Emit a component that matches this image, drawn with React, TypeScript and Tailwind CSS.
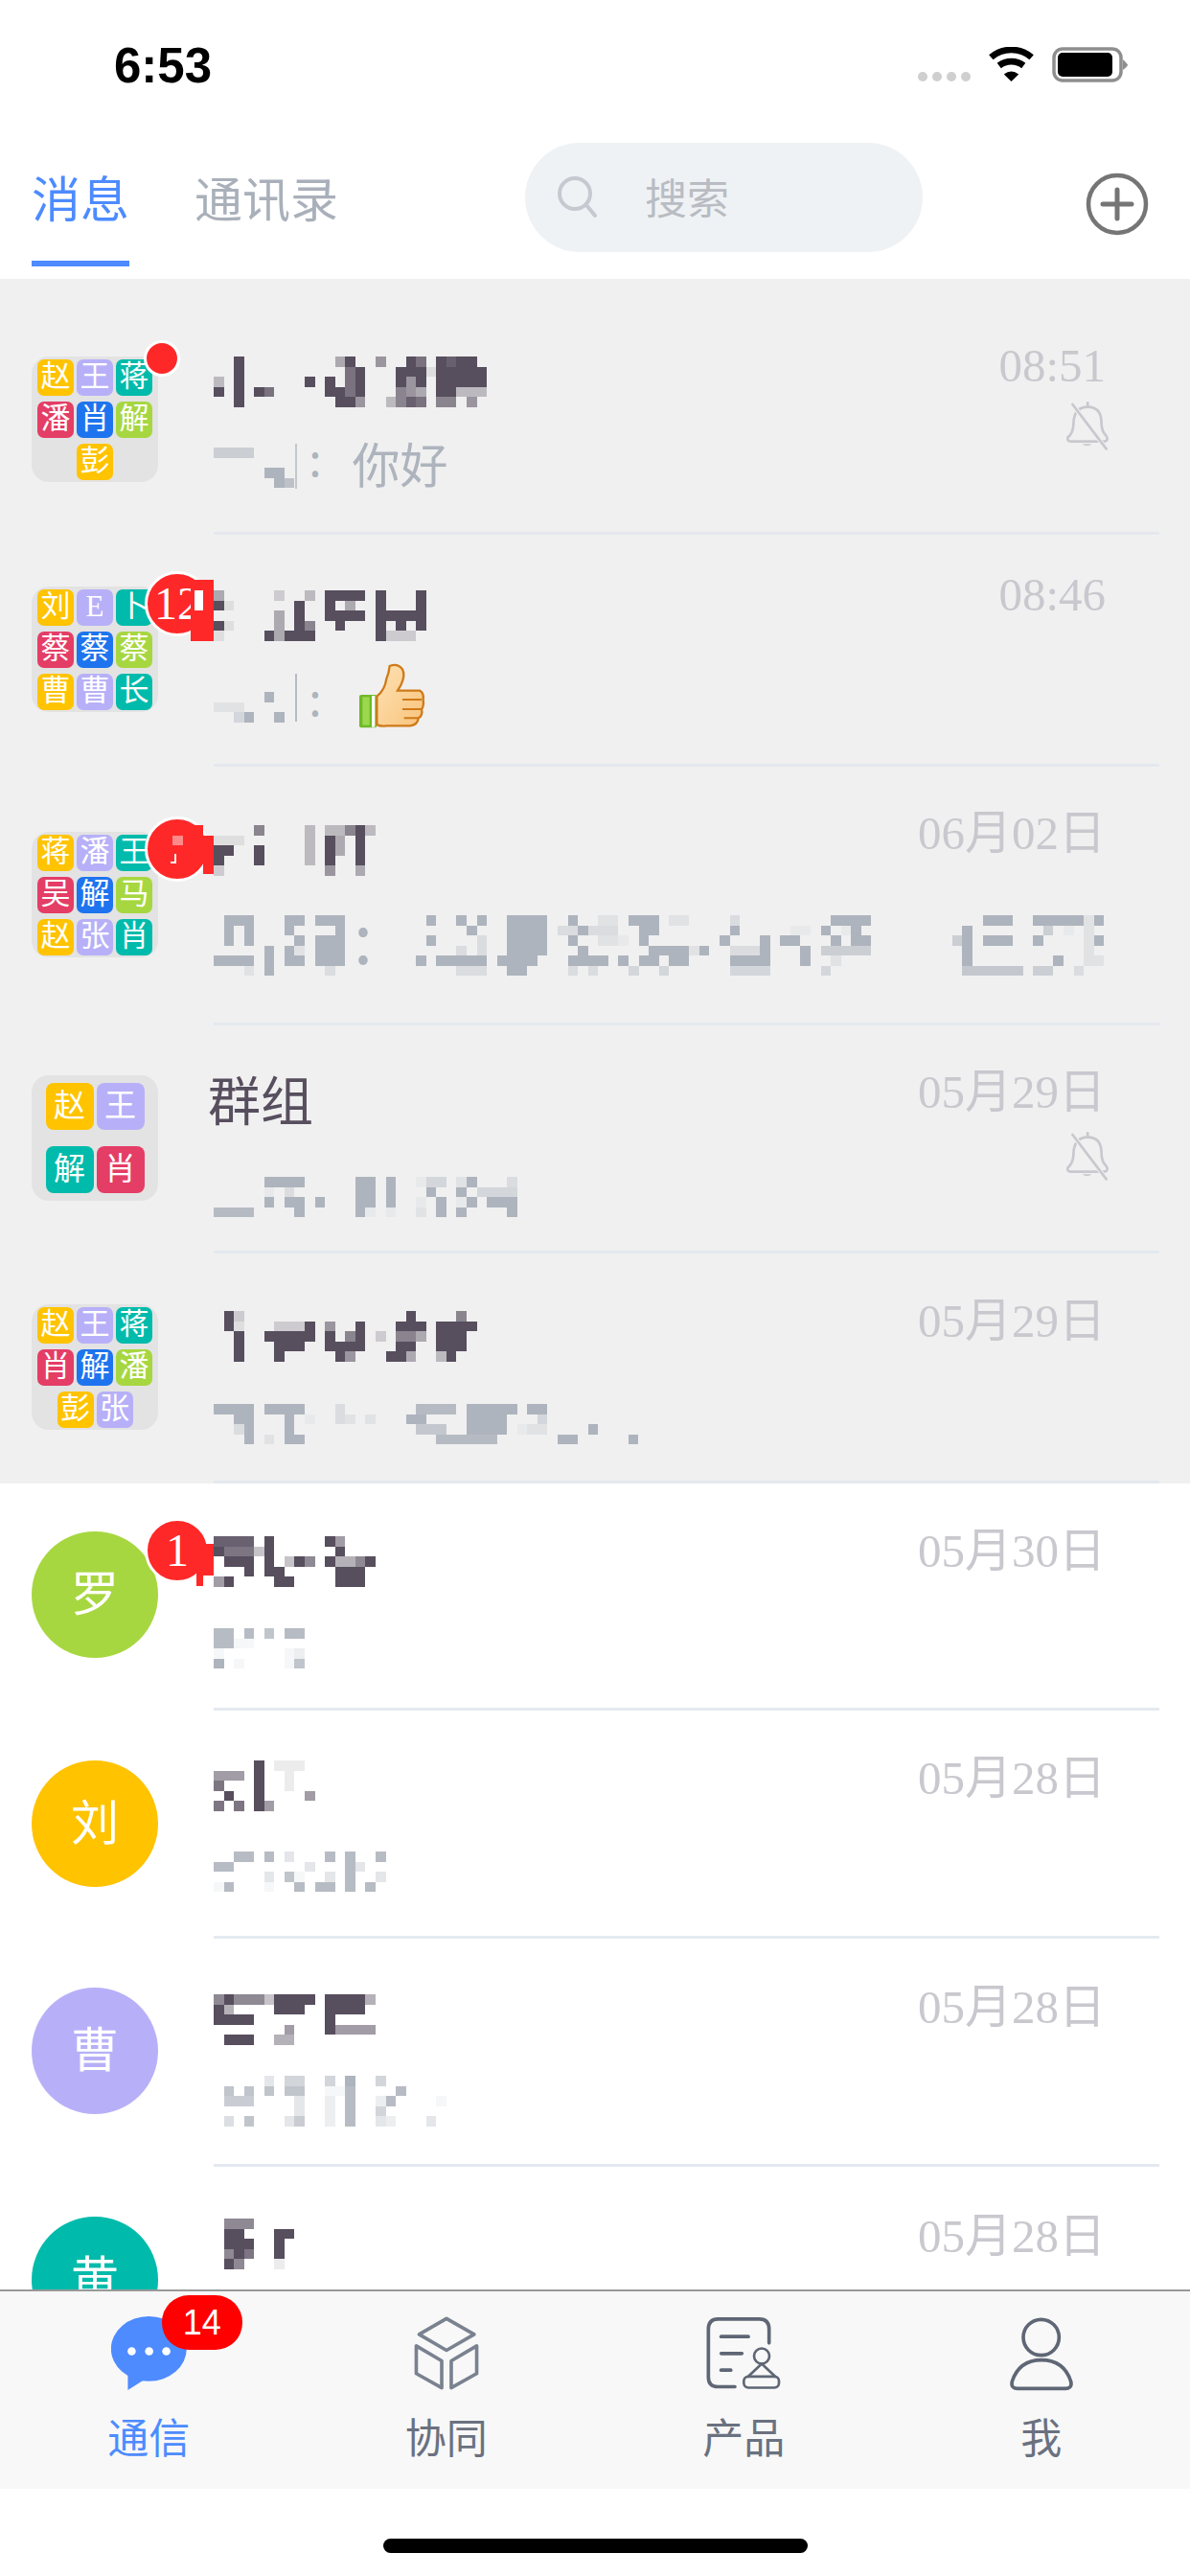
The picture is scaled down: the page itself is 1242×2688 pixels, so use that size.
import React from 'react';

const CELL = 10.56;
const DARK = '#574e5e';
const GRAY = '#aeb4bd';
const TILE_COLORS = ['bg-[#ffc300]', 'bg-[#b7b0f8]', 'bg-[#00bbab]', 'bg-[#e43d66]', 'bg-[#1e74ee]', 'bg-[#a7d740]'];

// a row is a list of tokens: "3", "3-6", "3-6:4" (column or column range, then strength 1-9)
const Mosaic: React.FC<{ rows: string[]; color: string }> = ({ rows, color }) => {
  const rects: { x: number; y: number; w: number; o: number }[] = [];
  let maxCol = 0;
  rows.forEach((row, y) => {
    row.split(' ').filter(Boolean).forEach(token => {
      const [range, value] = token.split(':');
      const [from, to] = range.split('-').map(Number);
      const end = to ?? from;
      maxCol = Math.max(maxCol, end + 1);
      rects.push({ x: from, y, w: end - from + 1, o: value ? Number(value) / 9 : 1 });
    });
  });
  const width = maxCol * CELL;
  const height = rows.length * CELL;
  return (
    <svg width={width} height={height} viewBox={`0 0 ${width} ${height}`} shapeRendering="crispEdges" className="block shrink-0 overflow-visible">
      {rects.map((r, i) => (
        <rect key={i} x={r.x * CELL} y={r.y * CELL} width={r.w * CELL} height={CELL} fill={color} opacity={r.o} />
      ))}
    </svg>
  );
};

const GroupAvatar: React.FC<{ names: string[] }> = ({ names }) => {
  const four = names.length === 4;
  return (
    <div className={`w-[132px] h-[131px] rounded-[18px] bg-[#e3e3e3] flex flex-wrap justify-center content-center gap-x-[3px] ${four ? 'gap-y-[17px]' : 'gap-y-[6px]'}`}>
      {names.map((name, i) => (
        <div
          key={i}
          className={`${TILE_COLORS[i % 6]} flex items-center justify-center text-white ${four ? 'w-[50px] h-[49px] rounded-[8px] text-[33px]' : 'w-[38px] h-[38px] rounded-[7px] text-[31px]'}`}
        >
          {name}
        </div>
      ))}
    </div>
  );
};

const CircleAvatar: React.FC<{ name: string; color: string }> = ({ name, color }) => (
  <div className={`w-[132px] h-[132px] rounded-full flex items-center justify-center text-white text-[50px] ${color}`}>{name}</div>
);

const Bell = ({ className }: { className: string }) => (
  <svg viewBox="630 265 140 155" width="47" height="52" className={className} fill="none" stroke="#c9c8ce" strokeWidth="8" strokeLinecap="round">
    <path d="M702 272V285" />
    <path d="M702 285Q660 285 658 335Q658 365 640 380Q638 392 650 392H755Q768 388 760 375Q745 360 745 335Q745 285 702 285Z" />
    <path d="M685 400Q700 412 715 400Z" fill="#c9c8ce" stroke="none" />
    <path d="M655 277L760 415" stroke="#f0f0f0" strokeWidth="14" />
    <path d="M655 277L760 415" />
  </svg>
);

const Thumb = ({ className }: { className: string }) => (
  <svg viewBox="0 0 300 270" width="100" height="90" className={className}>
    <defs>
      <linearGradient id="hand" x1="0" y1="0" x2="1" y2="1">
        <stop offset="0" stopColor="#fde2b4" />
        <stop offset="1" stopColor="#f9c37c" />
      </linearGradient>
    </defs>
    <rect x="45" y="135" width="55" height="103" rx="6" fill="#6fb928" />
    <rect x="55" y="142" width="22" height="88" fill="#9bd84e" />
    <rect x="84" y="138" width="10" height="98" fill="#ffffff" />
    <path
      d="M100 140Q125 120 130 85Q138 65 140 45Q165 35 180 55Q190 75 175 105L165 122H235Q248 130 245 150Q248 170 240 180Q245 200 230 208Q228 228 205 232H130Q110 235 100 228Z"
      fill="url(#hand)"
      stroke="#d07a18"
      strokeWidth="7"
    />
    <path d="M180 150H240M180 180H238M185 208H228" stroke="#d07a18" strokeWidth="6" fill="none" />
  </svg>
);

type Row = {
  group?: string[];
  circle?: { name: string; color: string };
  badge?: React.ReactNode;
  rowCls: string;
  avatarCls: string;
  titleCls: string;
  title?: string[];
  titleText?: string;
  subCls: string;
  sub?: string[];
  time: string;
  timeCls: string;
  bellCls?: string;
  extra?: React.ReactNode;
};

const Colon = ({ className }: { className: string }) => (
  <span className={`absolute -translate-x-1/2 leading-none text-[#aeb4bd] font-['Noto_Sans_CJK_SC',sans-serif] ${className}`}>:</span>
);

const Dot = () => (
  <div className="absolute left-[117px] top-[-17px] w-[38px] h-[38px] rounded-full bg-[#ff2828] border-[3px] border-white" />
);

const NumBadge: React.FC<{ className: string; text?: string; children?: React.ReactNode }> = ({ className, text, children }) => (
  <div className={`absolute w-[68px] h-[68px] rounded-full bg-[#ff2828] border-[3px] border-white flex items-center justify-center text-white text-[48px] leading-none ${className}`}>
    {text}
    {children}
  </div>
);

const grayRows: Row[] = [
  {
    group: ['赵', '王', '蒋', '潘', '肖', '解', '彭'],
    badge: <Dot />,
    rowCls: 'h-[267px]',
    avatarCls: 'mt-[81px]',
    titleCls: 'pt-[81px]',
    title: [
      '2 12:4 13 16:5 19 20:7 22 23:8 24-25',
      '2 13:7 14 18-20 21:1 22-26',
      '0:3 2 9 11 13:7 14 18 19:5 20 22-26',
      '0 2 4 5:7 11-12 13:7 14 18:6 19:5 20:4 22-23 24-26:3',
      '2 12-13 14:5 17:3 18:6 19:8 20:7 22-23:6 25:5',
    ],
    subCls: 'mt-[42px]',
    sub: ['0-3:5', '', '5-6', '6 7:7'],
    extra: (
      <>
        <span className="absolute left-[85px] top-[-4px] w-[2px] h-[47px] bg-[#c3c8cf]" />
        <Colon className="left-[106px] top-[-15px] text-[48px]" />
        <span className="ml-[60px] -mt-[10px] text-[50px] leading-[60px] text-[#aeb4bd]">你好</span>
      </>
    ),
    time: '08:51',
    timeCls: 'mt-[67px]',
    bellCls: 'mt-[12px]',
  },
  {
    group: ['刘', 'E', '卜', '蔡', '蔡', '蔡', '曹', '曹', '长'],
    badge: (
      <NumBadge className="left-[118px] top-[-16px]" text="12">
        <span className="absolute left-[45px] top-[6px] w-[24px] h-[64px] bg-[#ff2828]" />
        <span className="absolute left-[49px] top-[17px] w-[9px] h-[21px] bg-white" />
      </NumBadge>
    ),
    rowCls: 'h-[242px]',
    avatarCls: 'mt-[54px]',
    titleCls: 'pt-[58px]',
    title: [
      '0:4 6:2 9:3 11-14 16 20',
      '0 1:1 8 11 13:4 16 20',
      '6:4 8 11-14 16-20',
      '0 1:1 6:4 8 9:6 12 16 18 20',
      '0:1 5 6:4 7-9 16 17-19:2',
    ],
    subCls: 'mt-[53px]',
    sub: ['5', '0-2:2', '2:4 3 6'],
    extra: (
      <>
        <span className="absolute left-[85px] top-[-19px] w-[2px] h-[50px] bg-[#b6bbc3]" />
        <Colon className="left-[106px] top-[-20px] text-[48px]" />
        <Thumb className="ml-[63px] -mt-[42px] shrink-0" />
      </>
    ),
    time: '08:46',
    timeCls: 'mt-[39px]',
  },
  {
    group: ['蒋', '潘', '王', '吴', '解', '马', '赵', '张', '肖'],
    badge: (
      <NumBadge className="left-[118px] top-[-16px]">
        <span className="absolute left-[21px] top-[6px] w-[37px] h-[11px] bg-[#ff2828]" />
        <span className="absolute left-[58px] top-[17px] w-[11px] h-[40px] bg-[#ff2828]" />
        <span className="absolute left-[26px] top-[17px] w-[11px] h-[10px] bg-[#ff8a8a]" />
        <span className="absolute left-[24px] top-[36px] w-[6px] h-[10px] border-r-2 border-b-2 border-white" />
      </NumBadge>
    ),
    rowCls: 'h-[270px]',
    avatarCls: 'mt-[68px]',
    titleCls: 'pt-[61px]',
    title: [
      '4:6 9:3 11-12:3 13:6 14 15:3',
      '0-2:1 9:3 11 12:4 14',
      '0-1 4 9:3 11 12:4 14',
      '0 4 9:3 11 14',
      '0:2 11:5 14:4',
    ],
    subCls: 'mt-[41px]',
    sub: [
      '1-3 7-8 10-12 21 24 26 29-32 35 38-39:2 41-43 45-46:2 51:3 61-64 76-78 81-85 86:2 87',
      '1 3 7 12 25 29-32 34-35:3 36 37:3 38-39:3 42-43 51 57-58:1 60 62:1 63 74 82:5 84:1 86:2',
      '1 3 8 10-12 21 26:3 29-32 35 38-39:2 40:1 42 50 54 56-57 61 63-64 73:5 74 76-78 81 86:2 87',
      '5 7 8:2 10-12 24:3 26:3 29-32 36 43-46 47:2 48 51-53:3 54 58 60-64:5 74 86:2',
      '0-3 5 7-8 10-12 20 22-26 28-31 35-38 40 42-43 45-46 51-54 58 61:2 74 83 86:2 87:2',
      '3:2 5 11:3 24-26:3 29-30 35:3 37:3 41:4 44:4 51-54:4 60:4 74-79:6 81-82:5 85:3',
    ],
    extra: <Colon className="left-[156px] top-[-16px] text-[72px]" />,
    time: '06月02日',
    timeCls: 'mt-[46px]',
  },
  {
    group: ['赵', '王', '解', '肖'],
    rowCls: 'h-[238px]',
    avatarCls: 'mt-[52px]',
    titleCls: 'pt-[51px]',
    titleText: '群组',
    subCls: 'mt-[47px]',
    sub: [
      '5-8 14-15 17 20:1 21-22:4 24:2 25 29:3',
      '5:1 7:3 14-15 17 21 24 26-29:4',
      '5 7-8 10 14-15 17 20:1 22 24:1 25 27-29',
      '0-3:8 8 14 15:1 17:1 20:2 22 24 29',
    ],
    time: '05月29日',
    timeCls: 'mt-[46px]',
    bellCls: 'mt-[16px]',
  },
  {
    group: ['赵', '王', '蒋', '肖', '解', '潘', '彭', '张'],
    rowCls: 'h-[240px]',
    avatarCls: 'mt-[53px]',
    titleCls: 'pt-[60px]',
    title: [
      '1 2:2 19 24:6',
      '1 2:1 6-8:2 9 11:5 14 18-20 22-25',
      '2 5-9 11 13:6 14 16:2 18-19:6 20:4 22-24',
      '2 6-8 11-14 18-19 22-24',
      '2 6 12 13:5 17-18 19:4 22:3 23',
    ],
    subCls: 'mt-[44px]',
    sub: [
      '0-3 5-8 12:3 20-23:8 25-28 29 31-32',
      '2-3 7 9:1 12:3 13:2 15:2 19-20 25-28 32:4',
      '2:3 3 7 20-22:6 25-28 30:1 31-32:2 37',
      '3 5:2 7-8 22-27:8 34-35 41',
    ],
    time: '05月29日',
    timeCls: 'mt-[47px]',
  },
];

const whiteRows: Row[] = [
  {
    circle: { name: '罗', color: 'bg-[#a7d740]' },
    badge: (
      <NumBadge className="left-[118px] top-[-14px]" text="1">
        <span className="absolute left-[51px] top-[24px] w-[18px] h-[33px] bg-[#ff2828]" />
        <span className="absolute left-[51px] top-[57px] w-[7px] h-[11px] bg-[#ff2828]" />
      </NumBadge>
    ),
    rowCls: 'h-[237px]',
    avatarCls: 'mt-[50px]',
    titleCls: 'pt-[55px]',
    title: [
      '0-3:8 5 11 12:5',
      '0 1-3:7 4:3 5 12',
      '1-3 5 7:3 8 9:6 11 12-13:4 14:6 15',
      '3 5-6 12-14',
      '0:5 1 6-7 12-14',
    ],
    subCls: 'mt-[43px]',
    sub: ['0-1:8 3:8 5:7 7-8:8', '0-1:8 2-3:1', '0:1 7:1 8:2', '0 2:1 7:1 8:7'],
    time: '05月30日',
    timeCls: 'mt-[47px]',
  },
  {
    circle: { name: '刘', color: 'bg-[#ffc300]' },
    rowCls: 'h-[238px]',
    avatarCls: 'mt-[52px]',
    titleCls: 'pt-[52px]',
    title: ['4 6-8:1', '0-2:5 4 7:1', '0:7 4 7:1', '1 4 9:5', '0:7 2:7 4 5:5'],
    subCls: 'mt-[42px]',
    sub: [
      '2-3:8 5:8 7:3 11:8 13:8 16:8',
      '0-1:8 9:3 13:8 14:3',
      '5:3 7:7 8:1 11:3 13:8 16:3',
      '0:1 1:8 5:1 8:8 10-11:8 13:8 15:8',
    ],
    time: '05月28日',
    timeCls: 'mt-[47px]',
  },
  {
    circle: { name: '曹', color: 'bg-[#b7b0f8]' },
    rowCls: 'h-[238px]',
    avatarCls: 'mt-[51px]',
    titleCls: 'pt-[58px]',
    title: ['0:6 1 2-4:6 5:3 6-9 11-14 15:4', '0 1:4 6-8 11-14', '0-3 11', '7:5 11 12-15:5', '1-3 6-7:4'],
    subCls: 'mt-[32px]',
    sub: [
      '5:3 7-8:5 11:5 13 16:5',
      '1:7 3:7 5:7 7-8:7 11-12:1 13:8 18:8',
      '1-3:6 8:3 11:2 13:8 16:2 17:8 22:1',
      '8:3 11:2 13:8 16:5',
      '1:4 3:7 7:3 8:6 11:2 13:8 16:3 17:2 21:3',
    ],
    time: '05月28日',
    timeCls: 'mt-[48px]',
  },
  {
    circle: { name: '黄', color: 'bg-[#00bbab]' },
    rowCls: 'h-[238px]',
    avatarCls: 'mt-[52px]',
    titleCls: 'pt-[54px]',
    title: ['1-3:6', '1-2 6-7', '1-3 6', '1:6 2 3:7 6', '1 2:6 6:1'],
    subCls: 'mt-[42px]',
    time: '05月28日',
    timeCls: 'mt-[49px]',
  },
];

const ChatRow: React.FC<{ row: Row; line: string }> = ({ row, line }) => (
  <div className={`flex shrink-0 ${row.rowCls}`}>
    <div className="w-[223px] pl-[33px] shrink-0">
      <div className={`relative z-10 w-[132px] ${row.avatarCls}`}>
        {row.group && <GroupAvatar names={row.group} />}
        {row.circle && <CircleAvatar {...row.circle} />}
        {row.badge}
      </div>
    </div>
    <div className={`flex flex-1 min-w-0 mr-[32px] border-b-[3px] ${line}`}>
      <div className={`flex-1 min-w-0 ${row.titleCls}`}>
        {row.title && <Mosaic rows={row.title} color={DARK} />}
        {row.titleText && <div className="-ml-[6px] text-[55px] leading-[60px] text-[#574e5e]">{row.titleText}</div>}
        {row.sub && (
          <div className={`relative flex ${row.subCls}`}>
            <Mosaic rows={row.sub} color={GRAY} />
            {row.extra}
          </div>
        )}
      </div>
      <div className="flex flex-col items-end shrink-0 pr-[56px]">
        <div className={`text-[49px] leading-[48px] text-[#c9c8ce] whitespace-nowrap ${row.timeCls}`}>{row.time}</div>
        {row.bellCls && <Bell className={`-mr-[4px] ${row.bellCls}`} />}
      </div>
    </div>
  </div>
);

const Tab: React.FC<{ label: string; active?: boolean; children: React.ReactNode }> = ({ label, active, children }) => (
  <div className="flex-1 flex flex-col items-center">
    <div className="relative h-[77px] flex items-center justify-center">{children}</div>
    <div className={`mt-[23px] text-[43px] leading-[48px] ${active ? 'text-[#4d8bff]' : 'text-[#6a7180]'}`}>{label}</div>
  </div>
);

export default function App() {
  return (
    <div className="w-[1242px] h-[2688px] overflow-hidden flex flex-col bg-white font-['Liberation_Serif','Noto_Sans_CJK_SC',sans-serif]">
      {/* status bar */}
      <div className="h-[120px] shrink-0 flex items-start pl-[119px] pr-[65px]">
        <div className="mt-[44px] text-[51px] leading-[50px] font-bold text-black font-['Liberation_Sans',sans-serif]">6:53</div>
        <div className="ml-auto mt-[49px] flex items-start">
          <div className="flex gap-[5px] mt-[26px]">
            <span className="w-[10px] h-[10px] rounded-full bg-[#cfcfcf]" />
            <span className="w-[10px] h-[10px] rounded-full bg-[#cfcfcf]" />
            <span className="w-[10px] h-[10px] rounded-full bg-[#cfcfcf]" />
            <span className="w-[10px] h-[10px] rounded-full bg-[#cfcfcf]" />
          </div>
          <svg viewBox="275 58 143 107" width="48" height="36" className="ml-[19px]">
            <path d="M282 90A97 97 0 0 1 408 90" fill="none" stroke="#000" strokeWidth="20" />
            <path d="M307 116A62 62 0 0 1 383 116" fill="none" stroke="#000" strokeWidth="20" />
            <path d="M345 165L322 143Q345 125 368 143Z" fill="#000" />
          </svg>
          <svg viewBox="0 0 79 37" width="79" height="37" className="ml-[18px]">
            <rect x="2" y="2" width="70" height="33" rx="9" fill="none" stroke="#8e8e8e" strokeWidth="3.5" />
            <rect x="6" y="6" width="57" height="25" rx="5" fill="#000" />
            <path d="M74 13Q79 18 79 18.5Q79 20 74 24Z" fill="#8e8e8e" />
          </svg>
        </div>
      </div>

      {/* header */}
      <div className="h-[171px] shrink-0 flex pl-[33px] font-['Noto_Sans_CJK_SC',sans-serif]">
        <div className="w-[102px] mt-[55px] flex flex-col">
          <div className="text-[51px] leading-[60px] text-[#4d8bff] whitespace-nowrap">消息</div>
          <div className="mt-[37px] h-[6px] bg-[#4d8bff]" />
        </div>
        <div className="ml-[68px] mt-[55px] text-[50px] leading-[60px] text-[#a9b0ba] whitespace-nowrap">通讯录</div>
        <div className="ml-[195px] mt-[29px] w-[415px] h-[114px] rounded-full bg-[#eff2f5] flex items-center pl-[34px]">
          <svg viewBox="0 0 42 44" width="42" height="44" fill="none" stroke="#c5c9d0" strokeWidth="4" strokeLinecap="round">
            <circle cx="18" cy="18" r="16" />
            <path d="M30 30L39 41" />
          </svg>
          <span className="ml-[49px] -mt-[3px] text-[44px] text-[#b9bcc2]">搜索</span>
        </div>
        <svg viewBox="0 0 66 66" width="66" height="66" className="ml-[170px] mt-[60px]" fill="none" stroke="#757575">
          <circle cx="33" cy="33" r="30" strokeWidth="4.5" />
          <path d="M18 33H48M33 18V48" strokeWidth="5" strokeLinecap="round" />
        </svg>
      </div>

      {/* list */}
      <div className="flex-1 min-h-0 overflow-hidden">
        <div className="bg-[#f0f0f0]">
          {grayRows.map((row, i) => (
            <ChatRow key={i} row={row} line="border-[#e4e8ee]" />
          ))}
        </div>
        {whiteRows.map((row, i) => (
          <ChatRow key={i} row={row} line="border-[#e5e9f0]" />
        ))}
      </div>

      {/* bottom tabs */}
      <div className="h-[208px] shrink-0 bg-[#f8f8f8] border-t-2 border-[#999999] pt-[26px] flex font-['Noto_Sans_CJK_SC',sans-serif]">
        <Tab label="通信" active>
          <svg viewBox="48 68 237 232" width="79" height="77">
            <ellipse cx="166" cy="170" rx="119" ry="102" fill="#4d8bff" />
            <path d="M100 245V300L150 268Z" fill="#4d8bff" />
            <circle cx="112" cy="178" r="13" fill="#fff" />
            <circle cx="167" cy="178" r="13" fill="#fff" />
            <circle cx="221" cy="178" r="13" fill="#fff" />
          </svg>
          <div className="absolute left-[53px] top-[-22px] w-[84px] h-[57px] rounded-[28px] bg-[#ff0000] flex items-center justify-center text-white text-[36px] font-['Liberation_Sans',sans-serif]">
            14
          </div>
        </Tab>
        <Tab label="协同">
          <svg viewBox="993 65 210 235" width="70" height="78" fill="none" stroke="#7a8290" strokeWidth="11" strokeLinejoin="round">
            <path d="M1098 72L1185 122L1098 172L1012 122Z" />
            <path d="M1003 158L1083 205V290L1003 245Z" />
            <path d="M1193 158L1113 205V290L1193 245Z" />
          </svg>
        </Tab>
        <Tab label="产品">
          <svg viewBox="55 70 240 230" width="80" height="77" fill="none" stroke="#5f6675" strokeLinecap="round">
            <path d="M148 290H95Q65 290 65 260V110Q65 78 95 78H225Q255 78 255 110V153" strokeWidth="11" />
            <path d="M105 133H190" strokeWidth="11" />
            <path d="M105 186H170" strokeWidth="11" />
            <path d="M105 238H135" strokeWidth="11" />
            <circle cx="232" cy="194" r="24" strokeWidth="8" />
            <path d="M232 218L190 258M232 218L274 258" strokeWidth="8" />
            <rect x="176" y="258" width="110" height="35" rx="14" strokeWidth="8" />
          </svg>
        </Tab>
        <Tab label="我">
          <svg viewBox="998 66 204 234" width="68" height="78" fill="none" stroke="#5f6675" strokeWidth="11">
            <circle cx="1099" cy="132" r="56" />
            <path d="M1100 203Q1030 203 1008 270Q1003 292 1025 292H1175Q1197 292 1192 270Q1170 203 1100 203Z" />
          </svg>
        </Tab>
      </div>

      {/* home indicator */}
      <div className="h-[91px] shrink-0 flex justify-center pt-[52px]">
        <div className="w-[443px] h-[15px] rounded-full bg-black" />
      </div>
    </div>
  );
}
